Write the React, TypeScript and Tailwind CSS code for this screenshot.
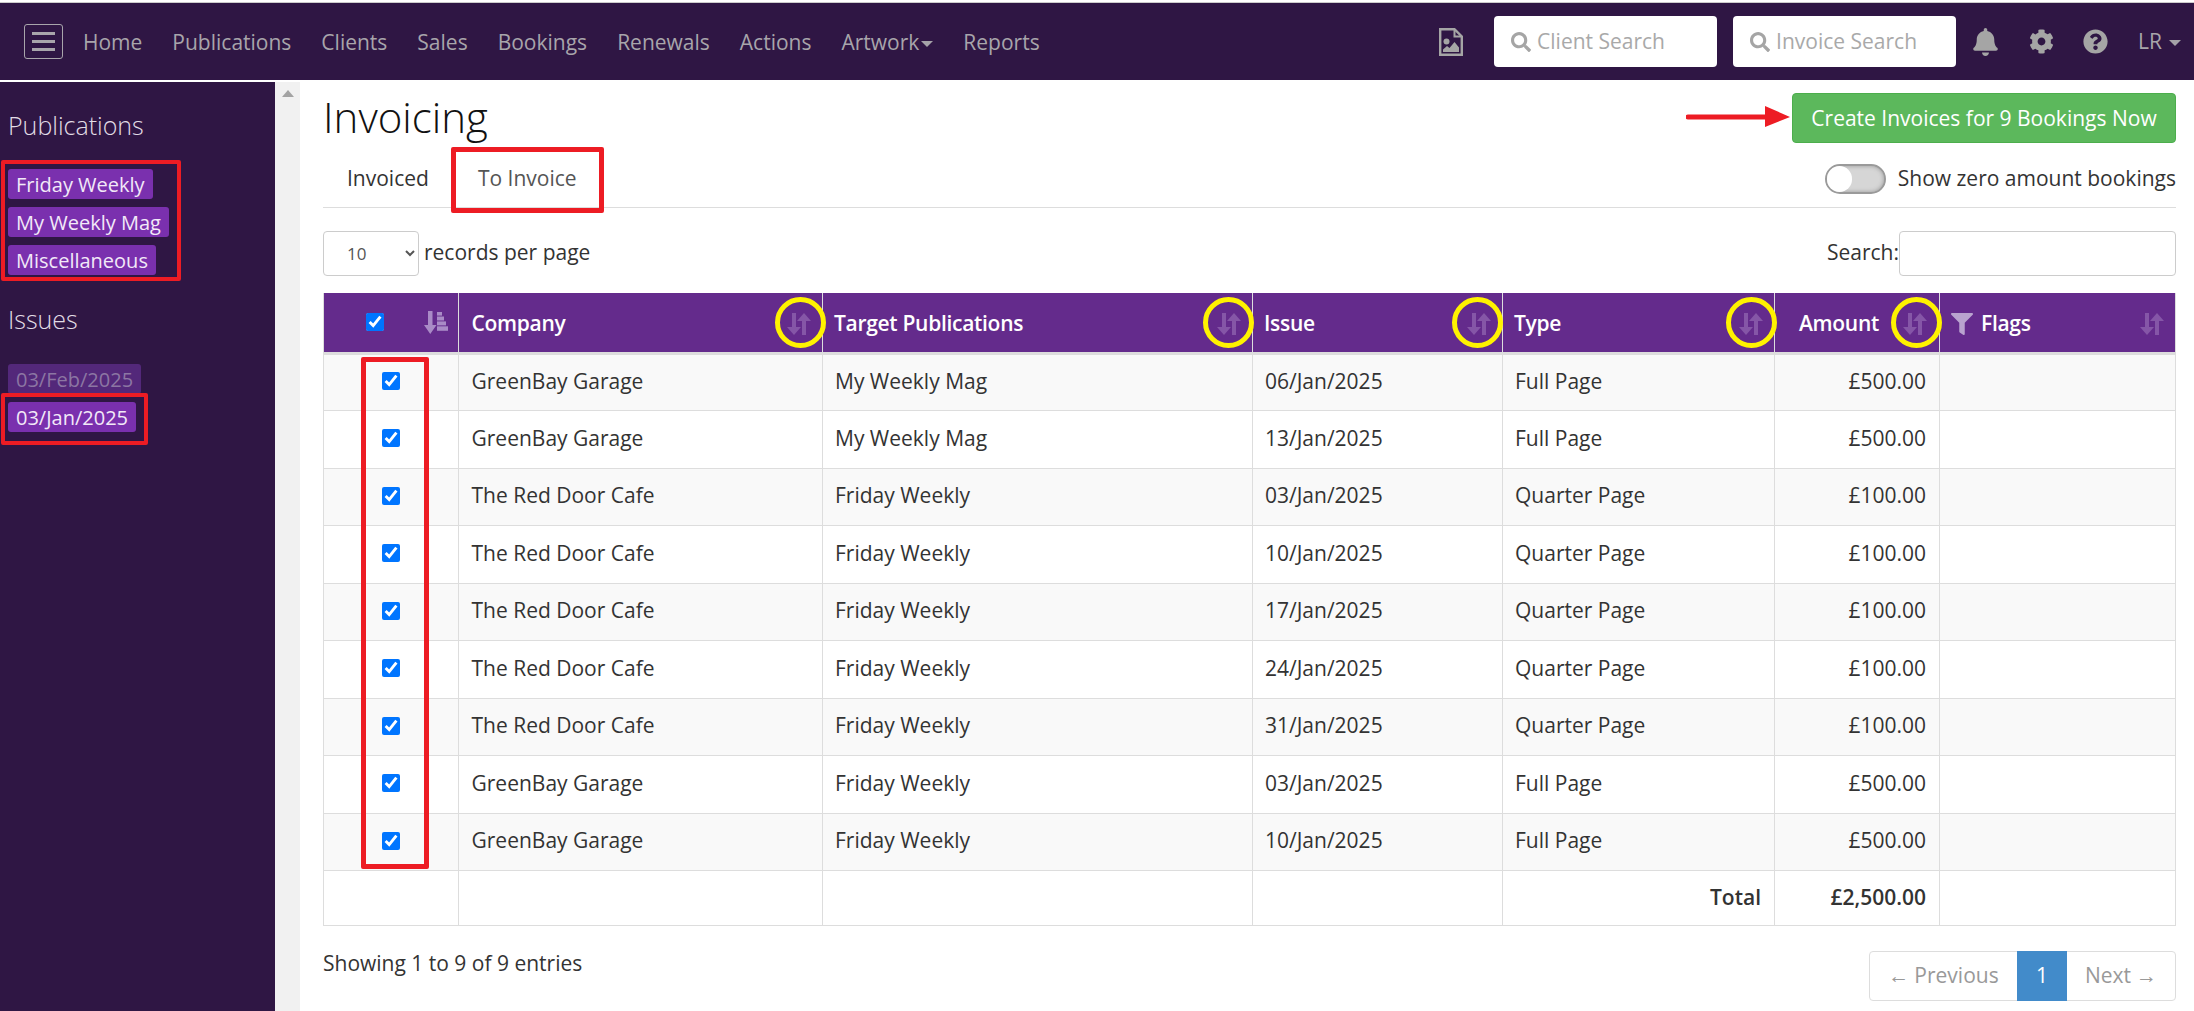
import { FaBell, FaCog, FaFilter, FaQuestionCircle, FaSearch } from "react-icons/fa"

const navLinks = ["Home", "Publications", "Clients", "Sales", "Bookings", "Renewals", "Actions", "Artwork", "Reports"]

const rows = [
  ["GreenBay Garage", "My Weekly Mag", "06/Jan/2025", "Full Page", "£500.00"],
  ["GreenBay Garage", "My Weekly Mag", "13/Jan/2025", "Full Page", "£500.00"],
  ["The Red Door Cafe", "Friday Weekly", "03/Jan/2025", "Quarter Page", "£100.00"],
  ["The Red Door Cafe", "Friday Weekly", "10/Jan/2025", "Quarter Page", "£100.00"],
  ["The Red Door Cafe", "Friday Weekly", "17/Jan/2025", "Quarter Page", "£100.00"],
  ["The Red Door Cafe", "Friday Weekly", "24/Jan/2025", "Quarter Page", "£100.00"],
  ["The Red Door Cafe", "Friday Weekly", "31/Jan/2025", "Quarter Page", "£100.00"],
  ["GreenBay Garage", "Friday Weekly", "03/Jan/2025", "Full Page", "£500.00"],
  ["GreenBay Garage", "Friday Weekly", "10/Jan/2025", "Full Page", "£500.00"],
]

function Caret({ wide }: { wide?: boolean }) {
  return (
    <span className={wide
      ? "inline-block ml-[7px] align-middle border-x-[6px] border-t-[6px] border-x-transparent border-t-[#a5a2a8]"
      : "inline-block ml-[2px] align-middle border-x-[6px] border-t-[6px] border-x-transparent border-t-[#a5a2a8]"} />
  )
}

function SortIcon() {
  return (
    <svg className="w-[24px] h-[22px] shrink-0" viewBox="0 0 24 22" fill="#8556a7">
      <path d="M5 0 H9 V14 H14 L7 22 L0 14 H5 Z" />
      <path d="M17 0 L24 8 H19 V22 H15 V8 H10 Z" />
    </svg>
  )
}

function SortAmountIcon() {
  return (
    <svg className="w-[24px] h-[23px] shrink-0" viewBox="0 0 24 23" fill="#a98bc6">
      <path d="M4 0 H8.5 V14 H12.5 L6.25 23 L0 14 H4 Z" />
      <rect x="13" y="1" width="5" height="3.6" />
      <rect x="13" y="5.5" width="7" height="4" />
      <rect x="13" y="10.4" width="9" height="4" />
      <rect x="13" y="15.3" width="11" height="4.5" />
    </svg>
  )
}

function FileImageIcon() {
  return (
    <svg className="w-[24px] h-[28px] shrink-0" viewBox="0 0 24 28">
      <path d="M1.2 1.2 H15.5 L22.8 8.5 V26.8 H1.2 Z" fill="none" stroke="#a5a5a5" strokeWidth="2.4" />
      <path d="M15.5 1.2 V8.5 H22.8" fill="none" stroke="#a5a5a5" strokeWidth="2" />
      <circle cx="7.5" cy="13.5" r="3" fill="#a5a5a5" />
      <path d="M4 24 V21.5 L8 18 L10.5 20 L15.5 14 L20 19.5 V24 Z" fill="#a5a5a5" />
    </svg>
  )
}

function NavSearch({ placeholder }: { placeholder: string }) {
  return (
    <div className="relative w-[223px] h-[51px]">
      <FaSearch className="absolute left-[17px] top-[16px] text-[20px] text-[#a5a5a5]" />
      <input
        placeholder={placeholder}
        className="w-full h-full pl-[43px] pb-[2px] bg-white rounded-[4px] text-[21px] outline-none placeholder:text-[#a9a9a9]"
      />
    </div>
  )
}

function Badge({ children, dim }: { children: string; dim?: boolean }) {
  return (
    <span className={dim
      ? "h-[30px] px-[8px] rounded-[3px] bg-[#53287a] text-[#8c76a3] text-[20px] leading-[31px]"
      : "h-[30px] px-[8px] rounded-[3px] bg-[#7a30ae] text-[#f2e9f8] text-[20px] leading-[31px]"}>
      {children}
    </span>
  )
}

function HeadCell({ label, first }: { label: string; first?: boolean }) {
  return (
    <th className="border-x border-[#ddd] font-semibold text-left p-0">
      <div className={first ? "flex items-center justify-between pt-[3px] pl-[13px] pr-[11px]" : "flex items-center justify-between pt-[3px] pl-[11px] pr-[11px]"}>
        <span>{label}</span>
        <SortIcon />
      </div>
    </th>
  )
}

export default function App() {
  return (
    <div className="relative w-full h-[1011px] overflow-hidden bg-white text-[#333] font-['Open_Sans',sans-serif] text-[21px]">
      <nav className="mt-[2px] h-[78px] border-t border-[#ccc] bg-[#2f1644] flex items-center pl-[24px] pr-[13px] text-[#a8a5ab]">
        <button className="w-[39px] h-[35px] border border-[#a8a5ab] rounded-[3px] flex flex-col items-center justify-center gap-[5px]">
          <span className="block w-[23px] h-[3px] bg-[#a8a5ab]" />
          <span className="block w-[23px] h-[3px] bg-[#a8a5ab]" />
          <span className="block w-[23px] h-[3px] bg-[#a8a5ab]" />
        </button>
        <div className="flex items-center gap-[30px] ml-[20px] pt-[2px]">
          {navLinks.map((link) => (
            <span key={link}>
              {link}
              {link === "Artwork" && <Caret />}
            </span>
          ))}
        </div>
        <div className="ml-auto flex items-center">
          <FileImageIcon />
          <div className="ml-[31px]"><NavSearch placeholder="Client Search" /></div>
          <div className="ml-[16px]"><NavSearch placeholder="Invoice Search" /></div>
          <FaBell className="ml-[16px] w-[27px] h-[28px] text-[#a5a5a5]" />
          <FaCog className="ml-[30px] w-[25px] h-[25px] text-[#a5a5a5]" />
          <FaQuestionCircle className="ml-[29px] w-[25px] h-[25px] text-[#a5a5a5]" />
          <span className="ml-[30px]">LR<Caret wide /></span>
        </div>
      </nav>

      <div className="mt-[2px] flex h-[929px]">
        <aside className="w-[276px] bg-[#2f1644] pl-[8px] pt-[27px] text-[#e2dde6]">
          <h3 className="text-[25px] leading-[32px] font-light">Publications</h3>
          <div className="mt-[28px] flex flex-col items-start gap-[8px]">
            <Badge>Friday Weekly</Badge>
            <Badge>My Weekly Mag</Badge>
            <Badge>Miscellaneous</Badge>
          </div>
          <h3 className="mt-[28px] text-[25px] leading-[32px] font-light">Issues</h3>
          <div className="mt-[29px] flex flex-col items-start gap-[8px]">
            <Badge dim>03/Feb/2025</Badge>
            <Badge>03/Jan/2025</Badge>
          </div>
        </aside>

        <div className="w-[25px] bg-[#f1f1f1] flex justify-center pt-[8px]">
          <span className="w-0 h-0 border-x-[6px] border-b-[7px] border-x-transparent border-b-[#a3a3a3]" />
        </div>

        <main className="flex-1 pl-[23px] pr-[18px]">
          <div className="flex items-center justify-between pt-[11px]">
            <h1 className="-mt-[2px] text-[42px] leading-[50px] font-light text-[#111]">Invoicing</h1>
            <button className="w-[384px] h-[50px] pt-[1px] rounded-[4px] bg-[#5cb85c] border border-[#4cae4c] text-white">
              Create Invoices for 9 Bookings Now
            </button>
          </div>

          <div className="h-[65px] pt-[7px] border-b border-[#ddd] flex items-center justify-between">
            <div className="flex">
              <span className="ml-[24px]">Invoiced</span>
              <span className="ml-[49px] text-[#555]">To Invoice</span>
            </div>
            <div className="flex items-center gap-[12px]">
              <span className="w-[61px] h-[30px] rounded-full border-2 border-[#9a9a9a] bg-[#d6d6d6] shadow-[inset_0_0_4px_#999] flex items-center">
                <span className="w-[25px] h-[26px] rounded-full bg-white" />
              </span>
              <span>Show zero amount bookings</span>
            </div>
          </div>

          <div className="mt-[23px] h-[45px] flex items-center justify-between">
            <div className="flex items-center gap-[5px]">
              <select className="w-[96px] h-[45px] pl-[19px] border border-[#ccc] rounded-[4px] bg-white text-[#555] text-[17px]">
                <option>10</option>
              </select>
              <span className="-mt-[2px]">records per page</span>
            </div>
            <div className="flex items-center">
              <span className="-mt-[2px]">Search:</span>
              <input className="w-[277px] h-[45px] border border-[#ccc] rounded-[4px]" />
            </div>
          </div>

          <table className="mt-[17px] w-[1852px] table-fixed border-collapse">
            <colgroup>
              <col className="w-[134.5px]" />
              <col className="w-[364.5px]" />
              <col className="w-[430px]" />
              <col className="w-[250px]" />
              <col className="w-[272px]" />
              <col className="w-[165px]" />
              <col className="w-[236px]" />
            </colgroup>
            <thead>
              <tr className="h-[60px] bg-[#642b8c] text-white border-b-[3px] border-b-[#ddd] tracking-[-0.3px]">
                <th className="border-x border-[#ddd] p-0">
                  <div className="flex items-center justify-between pl-[42px] pr-[10px]">
                    <input type="checkbox" checked readOnly className="w-[18px] h-[18px]" />
                    <SortAmountIcon />
                  </div>
                </th>
                <HeadCell label="Company" first />
                <HeadCell label="Target Publications" />
                <HeadCell label="Issue" />
                <HeadCell label="Type" />
                <th className="border-x border-[#ddd] font-semibold text-left p-0">
                  <div className="flex items-center justify-between pt-[3px] pl-[24px] pr-[12px]">
                    <span>Amount</span>
                    <SortIcon />
                  </div>
                </th>
                <th className="border-x border-[#ddd] font-semibold text-left p-0">
                  <div className="flex items-center pt-[3px] pl-[11px] pr-[11px]">
                    <FaFilter className="text-[22px] text-[#b9a3cf]" />
                    <span className="ml-[8px]">Flags</span>
                    <span className="ml-auto"><SortIcon /></span>
                  </div>
                </th>
              </tr>
            </thead>
            <tbody>
              {rows.map((row, i) => (
                <tr key={i} className={i % 2 === 0 ? "h-[57.5px] bg-[#f9f9f9]" : "h-[57.5px] bg-white"}>
                  <td className="border border-[#ddd] p-0 pb-[2px]">
                    <input type="checkbox" checked readOnly className="block mx-auto w-[18px] h-[18px]" />
                  </td>
                  <td className="border border-[#ddd] px-[13px] pb-[2px]">{row[0]}</td>
                  <td className="border border-[#ddd] px-[12px] pb-[2px]">{row[1]}</td>
                  <td className="border border-[#ddd] px-[12px] pb-[2px]">{row[2]}</td>
                  <td className="border border-[#ddd] px-[12px] pb-[2px]">{row[3]}</td>
                  <td className="border border-[#ddd] px-[13px] pb-[2px] text-right">{row[4]}</td>
                  <td className="border border-[#ddd]" />
                </tr>
              ))}
              <tr className="h-[55px] font-semibold">
                <td className="border border-[#ddd]" />
                <td className="border border-[#ddd]" />
                <td className="border border-[#ddd]" />
                <td className="border border-[#ddd]" />
                <td className="border border-[#ddd] px-[13px] text-right">Total</td>
                <td className="border border-[#ddd] px-[13px] text-right">£2,500.00</td>
                <td className="border border-[#ddd]" />
              </tr>
            </tbody>
          </table>

          <div className="mt-[25px] flex items-start justify-between">
            <span className="leading-[24px]">Showing 1 to 9 of 9 entries</span>
            <div className="flex h-[50px] border border-[#ddd] rounded-[4px] text-[#999] items-stretch">
              <span className="w-[147px] flex items-center justify-center gap-[5px]">
                <span className="font-['Liberation_Sans',sans-serif]">←</span> Previous
              </span>
              <span className="w-[50px] -my-px bg-[#428bca] text-white flex items-center justify-center">1</span>
              <span className="w-[108px] flex items-center justify-center gap-[5px]">
                Next <span className="font-['Liberation_Sans',sans-serif]">→</span>
              </span>
            </div>
          </div>
        </main>
      </div>

      {/* annotations drawn on top of the screenshot */}
      <div className="absolute left-[1px] top-[160px] w-[180px] h-[121px] border-[4px] border-[#ed1c24] rounded-[2px]" />
      <div className="absolute left-[1px] top-[393px] w-[147px] h-[52px] border-[4px] border-[#ed1c24] rounded-[2px]" />
      <div className="absolute left-[451px] top-[147px] w-[153px] h-[66px] border-[5px] border-[#ed1c24] rounded-[2px]" />
      <div className="absolute left-[361px] top-[357px] w-[68px] h-[512px] border-[5px] border-[#ed1c24] rounded-[2px]" />
      <div className="absolute left-[775px] top-[297px] w-[51px] h-[51px] border-[5px] border-[#fff200] rounded-full" />
      <div className="absolute left-[1203px] top-[297px] w-[51px] h-[51px] border-[5px] border-[#fff200] rounded-full" />
      <div className="absolute left-[1452px] top-[297px] w-[51px] h-[51px] border-[5px] border-[#fff200] rounded-full" />
      <div className="absolute left-[1726px] top-[297px] w-[51px] h-[51px] border-[5px] border-[#fff200] rounded-full" />
      <div className="absolute left-[1891px] top-[297px] w-[51px] h-[51px] border-[5px] border-[#fff200] rounded-full" />
      <svg className="absolute left-[1686px] top-[105px] w-[105px] h-[23px]" viewBox="0 0 105 23">
        <path d="M2 12 H80" stroke="#ed1c24" strokeWidth="5" strokeLinecap="round" />
        <path d="M79 1 L104 12 L79 22 Z" fill="#ed1c24" />
      </svg>
    </div>
  )
}
